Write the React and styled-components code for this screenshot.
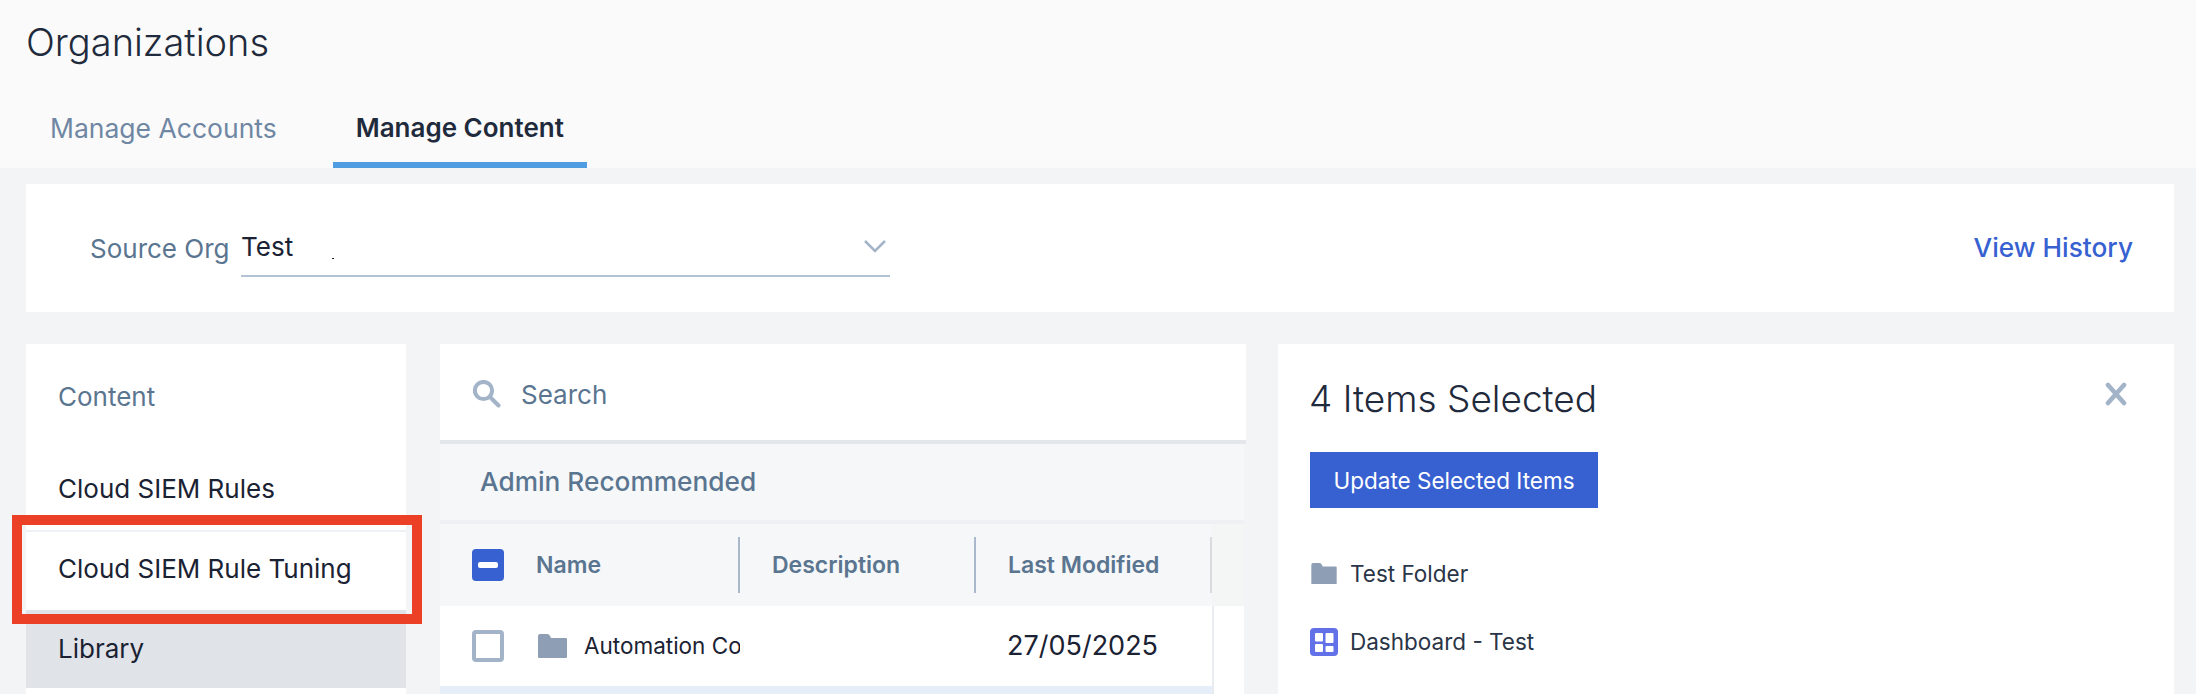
import styled, { createGlobalStyle } from 'styled-components';

const GlobalStyle = createGlobalStyle`
  html, body {
    margin: 0;
    height: 694px;
    overflow: hidden;
    background: #f3f4f6;
    font-family: "Inter", "Liberation Sans", sans-serif;
  }
  * { box-sizing: border-box; }
`;

function FolderIcon({ width, height }) {
  return (
    <svg width={width} height={height} viewBox="0 0 29 24" fill="#8e9fb5" style={{ flexShrink: 0 }}>
      <path d="M2 0h7c1.5 0 2.5.8 3 2l1 2h15a1 1 0 0 1 1 1v18a1 1 0 0 1-1 1H1a1 1 0 0 1-1-1V2a2 2 0 0 1 2-2z" />
    </svg>
  );
}

function DashboardIcon() {
  return (
    <svg width="28" height="28" viewBox="0 0 28 28" style={{ flexShrink: 0 }}>
      <rect width="28" height="28" rx="4" fill="#6271e8" />
      <rect x="5" y="5" width="8" height="8.5" rx="1" fill="#fff" />
      <rect x="5" y="16" width="8" height="8" rx="1" fill="#fff" />
      <rect x="15.5" y="5" width="8" height="10" rx="1" fill="#fff" />
      <rect x="15.5" y="18" width="8" height="6" rx="1" fill="#fff" />
    </svg>
  );
}

export default function App() {
  return (
    <>
      <GlobalStyle />
      <Header>
        <Title>Organizations</Title>
        <Tabs>
          <Tab>Manage Accounts</Tab>
          <Tab $active>Manage Content</Tab>
        </Tabs>
      </Header>
      <Main>
        <SourceBar>
          <SourceLabel>Source Org</SourceLabel>
          <SourceSelect>
            Test
            <svg width="22" height="14" viewBox="0 0 22 14" fill="none" stroke="#a3b4c8" strokeWidth="2.5">
              <path d="M1 2l10 10L21 2" />
            </svg>
          </SourceSelect>
          <HistoryLink>View History</HistoryLink>
        </SourceBar>
        <Columns>
          <NavPanel>
            <NavHeading>Content</NavHeading>
            <NavItem>Cloud SIEM Rules</NavItem>
            <NavItem $bordered>Cloud SIEM Rule Tuning</NavItem>
            <NavItem $active>Library</NavItem>
            <Callout />
          </NavPanel>
          <ListPanel>
            <SearchRow>
              <SearchIcon width="29" height="28" viewBox="0 0 29 28" fill="none" stroke="#a3b4c8" strokeWidth="4">
                <circle cx="11.5" cy="10.5" r="8.6" />
                <path d="M18 17l8.5 8.5" strokeLinecap="round" />
              </SearchIcon>
              Search
            </SearchRow>
            <ListBody>
              <GroupHeading>Admin Recommended</GroupHeading>
              <TableHead>
                <CheckCell>
                  <Checkbox $checked>
                    <Dash />
                  </Checkbox>
                </CheckCell>
                <HeadCell $width={204}>Name</HeadCell>
                <HeadCell $width={236} $padded>Description</HeadCell>
                <HeadCell $width={236} $padded $muted>Last Modified</HeadCell>
                <HeadFiller />
              </TableHead>
              <TableBody>
                <TableRow>
                  <CheckCell>
                    <Checkbox />
                  </CheckCell>
                  <NameCell>
                    <FolderIcon width={29} height={24} />
                    <NameText>Automation Content</NameText>
                  </NameCell>
                  <DescriptionCell />
                  <DateCell>27/05/2025</DateCell>
                </TableRow>
                <SelectedRow />
              </TableBody>
            </ListBody>
          </ListPanel>
          <SelectionPanel>
            <SelectionTop>
              <SelectionTitle>4 Items Selected</SelectionTitle>
              <svg width="22" height="24" viewBox="0 0 22 24" stroke="#a3b4c8" strokeWidth="4.6" strokeLinecap="round">
                <path d="M3 3l16 18M19 3L3 21" />
              </svg>
            </SelectionTop>
            <UpdateButton>Update Selected Items</UpdateButton>
            <SelectedList>
              <SelectedItem>
                <FolderIcon width={26} height={21} />
                Test Folder
              </SelectedItem>
              <SelectedItem>
                <DashboardIcon />
                Dashboard - Test
              </SelectedItem>
            </SelectedList>
          </SelectionPanel>
        </Columns>
      </Main>
    </>
  );
}

const Header = styled.header`
  height: 168px;
  background: #fafafa;
  padding: 16px 0 0 26px;
`;

const Title = styled.h1`
  margin: 0;
  height: 52px;
  font-size: 38px;
  line-height: 52px;
  font-weight: 300;
  color: #1f2a3c;
`;

const Tabs = styled.nav`
  display: flex;
  margin: 40px 0 0 0;
`;

const Tab = styled.div`
  height: 60px;
  padding: 0 ${(p) => (p.$active ? 23 : 24)}px;
  line-height: 40px;
  font-size: ${(p) => (p.$active ? 26 : 26.5)}px;
  font-weight: ${(p) => (p.$active ? 600 : 400)};
  color: ${(p) => (p.$active ? '#1f2a3c' : '#6f87a3')};
  border-bottom: 6px solid ${(p) => (p.$active ? '#4f9ce0' : 'transparent')};
  margin-right: ${(p) => (p.$active ? 0 : 32)}px;
`;

const Main = styled.main`
  padding: 16px 22px 0 26px;
`;

const SourceBar = styled.section`
  display: flex;
  align-items: center;
  height: 128px;
  background: #fff;
  padding: 0 41px 0 64px;
`;

const SourceLabel = styled.span`
  width: 151px;
  font-size: 26px;
  color: #5a7590;
`;

const SourceSelect = styled.div`
  position: relative;
  display: flex;
  align-items: center;
  justify-content: space-between;
  width: 649px;
  height: 52px;
  margin-top: 6px;
  padding: 0 4px 8px 0;
  font-size: 26px;
  color: #1a2233;
  border-bottom: 2px solid #b3c3d4;
  &::after {
    content: '';
    position: absolute;
    left: 91px;
    top: 33px;
    width: 2px;
    height: 1px;
    background: #1a2233;
  }
`;

const HistoryLink = styled.a`
  margin: -2px 0 0 auto;
  font-size: 26.25px;
  font-weight: 500;
  color: #3761d1;
`;

const Columns = styled.div`
  display: flex;
  gap: 32px;
  margin-top: 32px;
  height: 350px;
`;

const NavPanel = styled.aside`
  position: relative;
  width: 380px;
  margin-right: 2px;
  background: #fff;
`;

const NavHeading = styled.div`
  height: 108px;
  padding: 36px 32px 0;
  font-size: 26px;
  line-height: 34px;
  color: #5a7590;
`;

const NavItem = styled.div`
  display: flex;
  align-items: center;
  height: ${(p) => (p.$bordered ? 80 : 78)}px;
  padding: 0 32px ${(p) => (p.$active ? 2 : 5)}px;
  font-size: 26px;
  color: #1a2233;
  background: ${(p) => (p.$active ? '#e0e4e9' : '#fff')};
  border-top: ${(p) => (p.$bordered ? '2px solid #eef1f5' : 'none')};
`;

const Callout = styled.div`
  position: absolute;
  left: -14px;
  top: 171px;
  width: 410px;
  height: 109px;
  border: 10px solid #ec4026;
`;

const ListPanel = styled.section`
  width: 806px;
  display: flex;
  flex-direction: column;
  overflow: hidden;
  & > * {
    flex-shrink: 0;
  }
`;

const SearchRow = styled.div`
  display: flex;
  align-items: center;
  gap: 20px;
  height: 100px;
  padding: 4px 32px 0;
  font-size: 26px;
  color: #5a7590;
  background: #fff;
  border-bottom: 4px solid #e3e7ec;
`;

const SearchIcon = styled.svg`
  margin-top: -1px;
`;

const ListBody = styled.div`
  width: 804px;
  background: #fff;
`;

const GroupHeading = styled.div`
  display: flex;
  align-items: center;
  height: 80px;
  padding: 0 40px 2px;
  background: #f5f7f9;
  border-bottom: 4px solid #eef0f3;
  font-size: 26.25px;
  font-weight: 500;
  color: #5a7590;
`;

const TableHead = styled.div`
  display: flex;
  align-items: center;
  height: 82px;
  padding-left: 32px;
  background: #f5f7f9;
`;

const CheckCell = styled.div`
  width: 64px;
  flex-shrink: 0;
`;

const HeadCell = styled.div`
  width: ${(p) => p.$width}px;
  height: 56px;
  line-height: 56px;
  flex-shrink: 0;
  padding-left: ${(p) => (p.$padded ? 32 : 0)}px;
  font-size: 23px;
  font-weight: 600;
  color: #5a7590;
  border-right: 2px solid ${(p) => (p.$muted ? '#d8dce0' : '#a9b9cb')};
`;

const HeadFiller = styled.div`
  flex: 1;
  align-self: stretch;
  background: #f4f6f5;
`;

const Checkbox = styled.div`
  display: flex;
  align-items: center;
  justify-content: center;
  width: 32px;
  height: 32px;
  border-radius: 4px;
  background: ${(p) => (p.$checked ? '#3761d1' : '#fff')};
  border: ${(p) => (p.$checked ? 'none' : '4px solid #a3b4c8')};
`;

const Dash = styled.div`
  width: 20px;
  height: 6px;
  border-radius: 2px;
  background: #fff;
`;

const TableBody = styled.div`
  width: 774px;
  border-right: 2px solid #e8ebf0;
`;

const TableRow = styled.div`
  display: flex;
  align-items: center;
  height: 80px;
  padding-left: 32px;
`;

const SelectedRow = styled.div`
  height: 80px;
  background: #e6eefa;
`;

const NameCell = styled.div`
  display: flex;
  align-items: center;
  gap: 17px;
  width: 204px;
  overflow: hidden;
  padding-left: 2px;
  flex-shrink: 0;
`;

const NameText = styled.span`
  margin-top: -2px;
  font-size: 22.5px;
  color: #1a2233;
  white-space: nowrap;
`;

const DescriptionCell = styled.div`
  width: 267px;
  flex-shrink: 0;
`;

const DateCell = styled.div`
  margin-top: -2px;
  font-size: 27px;
  color: #1a2233;
`;

const SelectionPanel = styled.section`
  flex: 1;
  padding: 0 47px 0 31px;
  background: #fff;
`;

const SelectionTop = styled.div`
  display: flex;
  align-items: flex-start;
  justify-content: space-between;
  height: 108px;
  padding-top: 33px;
  svg {
    margin-top: 5px;
  }
`;

const SelectionTitle = styled.h2`
  margin: 0;
  font-size: 37px;
  line-height: 44px;
  font-weight: 300;
  color: #1f2a3c;
`;

const UpdateButton = styled.button`
  display: block;
  width: 288px;
  height: 56px;
  margin-left: 1px;
  border: none;
  padding: 0;
  background: #3761d1;
  color: #fff;
  font-family: inherit;
  font-size: 22.5px;
`;

const SelectedList = styled.div`
  display: flex;
  flex-direction: column;
  gap: 39px;
  margin: 52px 0 0 1px;
`;

const SelectedItem = styled.div`
  display: flex;
  align-items: center;
  gap: 12px;
  height: 28px;
  font-size: 22.5px;
  color: #2a3547;
  &:first-child {
    gap: 13px;
    padding: 0 0 1px 1px;
  }
  &:last-child {
    padding-top: 1px;
  }
`;
